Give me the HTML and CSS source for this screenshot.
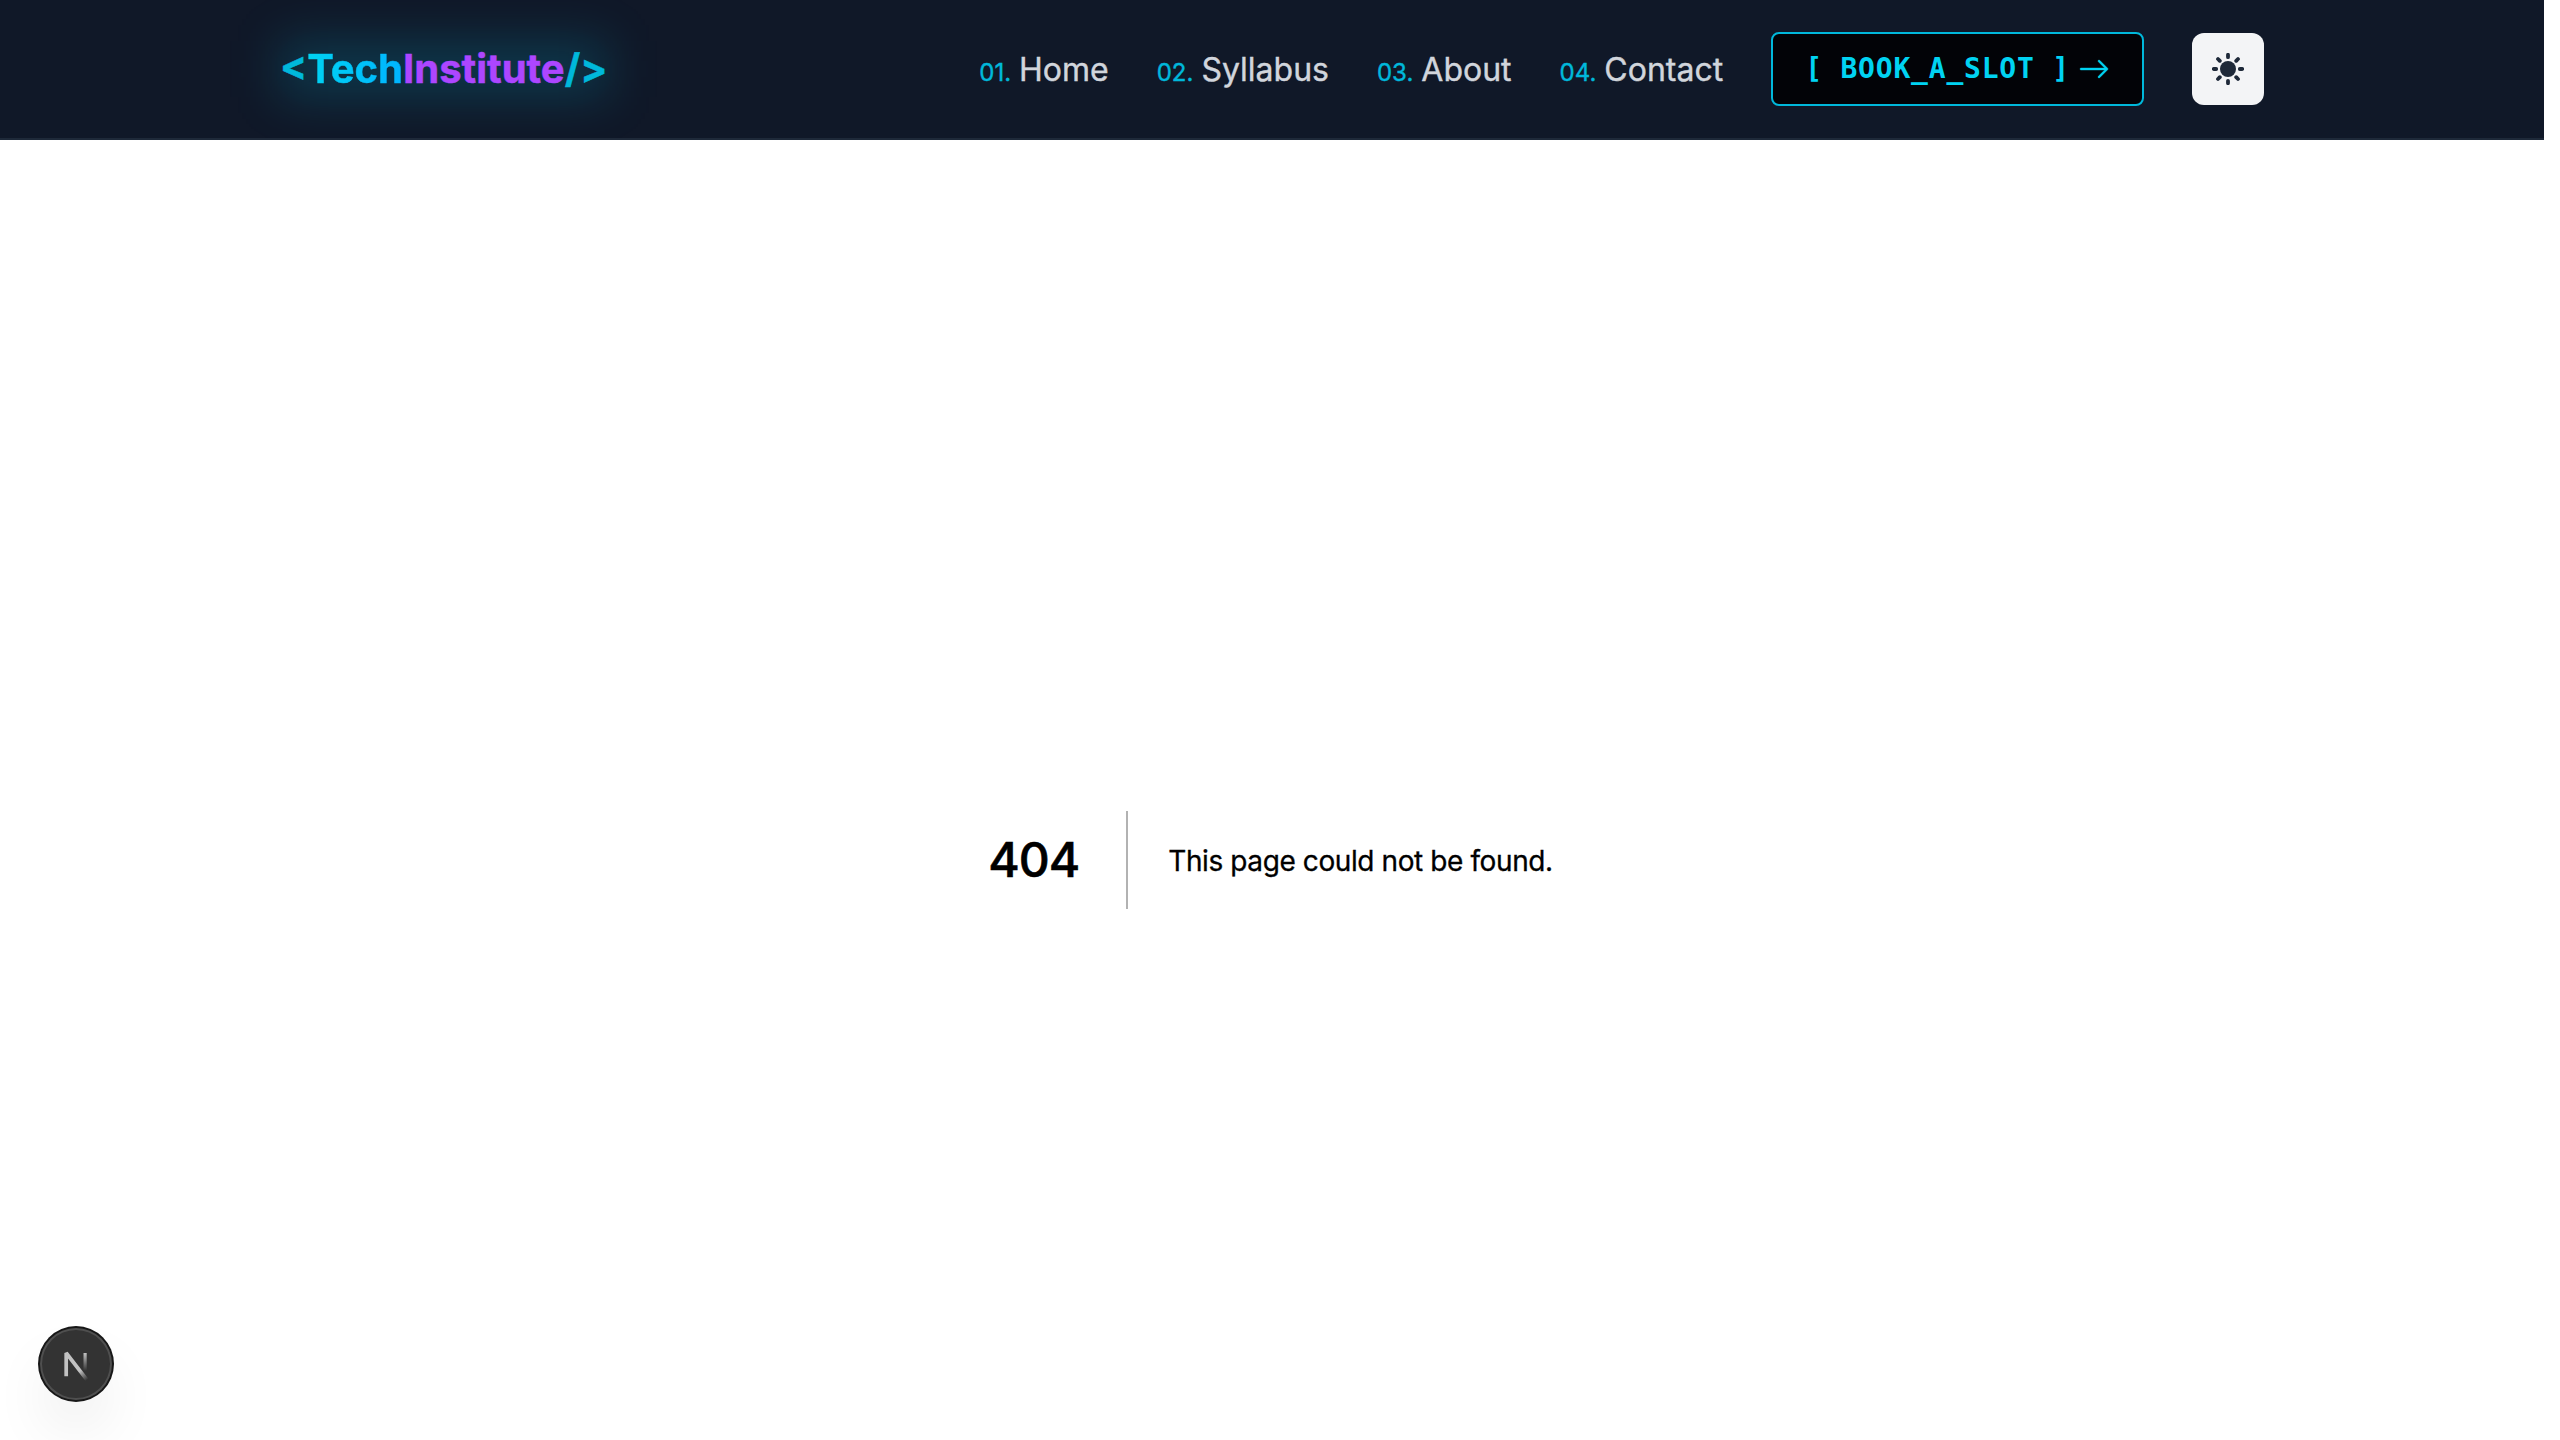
FILE: index.html
```html
<!DOCTYPE html>
<html lang="en">
<head>
<meta charset="utf-8">
<title>404: This page could not be found.</title>
<link rel="stylesheet" href="styles.css">
</head>
<body>
<header class="header">
  <div class="container">
    <a class="logo"><span class="bracket">&lt;</span><span class="tech">Tech</span><span class="institute">Institute</span><span class="bracket">/&gt;</span></a>
    <nav class="nav">
      <a class="link"><span class="num">01.</span>Home</a>
      <a class="link"><span class="num">02.</span>Syllabus</a>
      <a class="link"><span class="num">03.</span>About</a>
      <a class="link"><span class="num">04.</span>Contact</a>
      <a class="book"><span>[ BOOK_A_SLOT ]</span><svg width="32" height="32" viewBox="0 0 16 16" fill="currentColor" stroke="currentColor" stroke-width=".2"><path fill-rule="evenodd" d="M1 8a.5.5 0 0 1 .5-.5h11.793l-3.147-3.146a.5.5 0 0 1 .708-.708l4 4a.5.5 0 0 1 0 .708l-4 4a.5.5 0 0 1-.708-.708L13.293 8.5H1.5A.5.5 0 0 1 1 8z"/></svg></a>
      <button class="toggle" aria-label="Toggle theme"><svg width="32" height="32" viewBox="-16 -16 32 32"><circle r="8" fill="currentColor"/><path d="M0-14.2v2.4M0 11.8v2.4M-14.2 0h2.4M11.8 0h2.4M-10-10l1.8 1.8M10-10l-1.8 1.8M-10 10l1.8-1.8M10 10l-1.8-1.8" stroke="currentColor" stroke-width="3.8" stroke-linecap="round"/></svg></button>
    </nav>
  </div>
</header>
<main class="error">
  <h1 class="code">404</h1>
  <h2 class="message">This page could not be found.</h2>
</main>
<div class="devtools">
  <svg width="72" height="72" viewBox="0 0 72 72" fill="none">
    <defs>
      <linearGradient id="diag" x1="37" y1="39" x2="47" y2="52" gradientUnits="userSpaceOnUse"><stop stop-color="#fff"/><stop offset=".3" stop-color="#fff"/><stop offset="1" stop-color="#fff" stop-opacity="0"/></linearGradient>
      <linearGradient id="stem" x1="45" y1="25" x2="45" y2="43" gradientUnits="userSpaceOnUse"><stop stop-color="#fff"/><stop offset="1" stop-color="#fff" stop-opacity="0"/></linearGradient>
    </defs>
    <g opacity=".7"><path d="M48.1 53.4L26.2 25V48.2" stroke="url(#diag)" stroke-width="3.7" stroke-linejoin="bevel"/><path d="M45.1 25V45" stroke="url(#stem)" stroke-width="3.2"/></g>
  </svg>
</div>
</body>
</html>
```
FILE: styles.css
```css
* { box-sizing: border-box; }
html, body { height: 100%; }
body {
  margin: 0;
  background: #fff;
  overflow: hidden;
  font-family: Inter, sans-serif;
}
.header {
  width: 2544px;
  height: 140px;
  background: #101828;
  border-bottom: 2px solid #1e2939;
  overflow: hidden;
}
.container {
  width: 2048px;
  height: 100%;
  margin: 0 auto;
  padding: 0 32px;
  display: flex;
  align-items: center;
  justify-content: space-between;
}
.logo {
  position: relative;
  font-size: 40px;
  line-height: 56px;
  font-weight: 700;
  isolation: isolate;
}
.logo::before {
  content: "";
  position: absolute;
  inset: 0;
  z-index: -1;
  background: rgba(0, 184, 219, .2);
  filter: blur(24px);
}
.bracket { color: #00b8db; -webkit-text-stroke: .5px #00b8db; }
.tech {
  background: linear-gradient(90deg, #00d3f2, #00b4ff);
  background-clip: text;
  color: transparent;
  -webkit-text-stroke: .5px transparent;
}
.institute { color: #ad46ff; -webkit-text-stroke: .5px #ad46ff; }
.nav {
  display: flex;
  align-items: center;
  gap: 48px;
}
.link {
  padding-top: 5px;
  font-size: 32px;
  line-height: 48px;
  color: #d1d5dc;
  -webkit-text-stroke: .4px currentColor;
}
.num {
  margin-right: 8px;
  font-size: 24px;
  color: #00b8db;
  -webkit-text-stroke: .4px #00b8db;
}
.book {
  height: 74px;
  padding: 0 32px;
  display: flex;
  align-items: center;
  gap: 8px;
  border: 2px solid #00b8db;
  border-radius: 8px;
  background: #020307;
  color: #00d3f2;
  font: 700 28px/40px "DejaVu Sans Mono", monospace;
  letter-spacing: .8px;
  white-space: pre;
}
.toggle {
  width: 72px;
  height: 72px;
  padding: 0;
  display: flex;
  align-items: center;
  justify-content: center;
  border: 0;
  border-radius: 12px;
  background: #f3f4f6;
  color: #1e2939;
}
.error {
  width: 2541px;
  height: 1300px;
  padding-top: 140px;
  display: flex;
  align-items: center;
  justify-content: center;
  color: #000;
}
.code {
  margin: 0 40px 0 0;
  padding-right: 47px;
  border-right: 2px solid rgba(0, 0, 0, .3);
  font-size: 48px;
  line-height: 98px;
  font-weight: 500;
  letter-spacing: -1px;
  -webkit-text-stroke: .6px #000;
}
.message {
  margin: 0;
  padding-top: 2px;
  font-size: 28px;
  line-height: 56px;
  font-weight: 400;
  letter-spacing: -.4px;
  -webkit-text-stroke: .3px #000;
}
.devtools {
  position: fixed;
  left: 40px;
  bottom: 40px;
  width: 72px;
  height: 72px;
  border-radius: 50%;
  background: #333;
  box-shadow: 0 0 0 2px #171717, inset 0 0 0 2px rgba(255, 255, 255, .14), 0 32px 64px -16px rgba(0, 0, 0, .2);
}
.devtools svg { display: block; }
```
